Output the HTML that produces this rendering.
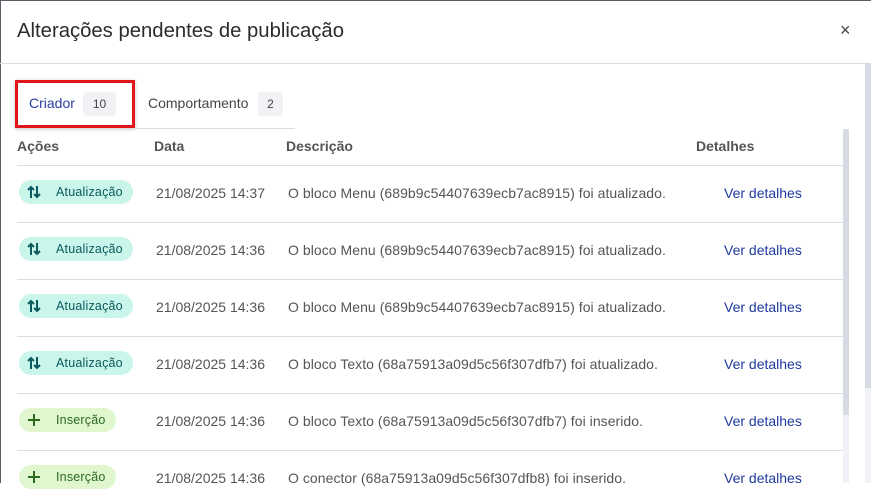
<!DOCTYPE html>
<html><head><meta charset="utf-8"><style>
*{margin:0;padding:0;box-sizing:border-box}
body{width:871px;height:483px;overflow:hidden;background:#fff;font-family:"Liberation Sans",sans-serif;position:relative}
.a{position:absolute;white-space:nowrap}
.hl{position:absolute;height:1px;background:#dcdde3}
.badge{position:absolute;left:19px;height:24px;border-radius:12px;font-size:12.5px;line-height:24px}
.up{background:#c9f5ea;color:#0b5a5e;width:114px}
.ins{background:#dff6cf;color:#2a6b1f;width:97px}
.badge span{position:absolute;left:37px;top:0;letter-spacing:0.2px}
.badge svg{position:absolute;left:8px;top:5px}
.d{font-size:14px;color:#555}
.desc{font-size:14px;color:#555;letter-spacing:0.05px}
.lnk{font-size:14px;color:#1f3a9e}
.th{font-size:14px;font-weight:bold;color:#555}
</style></head><body>
<div class="a" style="left:0;top:0;width:871px;height:1px;background:#5a5d66"></div>
<div class="a" style="left:0;top:0;width:1px;height:483px;background:#5a5d66"></div>
<div class="a" style="left:17px;top:20px;font-size:20.3px;color:#2b2b2b">Alterações pendentes de publicação</div>
<div class="a" style="left:840px;top:20px;font-size:18px;color:#444">×</div>
<div class="hl" style="left:0;top:63px;width:871px"></div>
<div class="a" style="left:865px;top:63px;width:6px;height:325px;background:#d8dbe3"></div>
<div class="a" style="left:865px;top:388px;width:6px;height:95px;background:#f1f2f7"></div>
<div class="a" style="left:843px;top:129px;width:6px;height:286px;background:#d8dbe3"></div>
<div class="a" style="left:843px;top:415px;width:6px;height:68px;background:#f1f2f7"></div>

<div class="a" style="left:15px;top:80px;width:120px;height:48px;border:3px solid #e0161b;box-shadow:0 1px 4px rgba(0,0,0,.25)"></div>
<div class="a" style="left:29px;top:95px;font-size:14px;color:#2a3f9f">Criador</div>
<div class="a" style="left:83px;top:92px;width:33px;height:24px;background:#f1f2f6;border-radius:4px;font-size:12px;color:#444;text-align:center;line-height:24px">10</div>
<div class="a" style="left:148px;top:95px;font-size:14px;color:#444">Comportamento</div>
<div class="a" style="left:258px;top:92px;width:25px;height:24px;background:#f1f2f6;border-radius:4px;font-size:12px;color:#444;text-align:center;line-height:24px">2</div>
<div class="hl" style="left:17px;top:128px;width:278px"></div>

<div class="a th" style="left:17px;top:138px">Ações</div>
<div class="a th" style="left:154px;top:138px">Data</div>
<div class="a th" style="left:286px;top:138px">Descrição</div>
<div class="a th" style="left:696px;top:138px">Detalhes</div>
<div class="hl" style="left:17px;top:165px;width:826px"></div>

<div class="badge up" style="top:180px"><svg width="14" height="14" viewBox="0 0 14 14" fill="none" stroke="#0b5a5e" stroke-width="2"><path d="M4 13V2M1 5l3-3 3 3M10 1v11M7 9l3 3 3-3"/></svg><span>Atualização</span></div>
<div class="a d" style="left:156px;top:185px">21/08/2025 14:37</div>
<div class="a desc" style="left:288px;top:185px">O bloco Menu (689b9c54407639ecb7ac8915) foi atualizado.</div>
<div class="a lnk" style="left:724px;top:185px">Ver detalhes</div>
<div class="hl" style="left:17px;top:222px;width:826px"></div>

<div class="badge up" style="top:237px"><svg width="14" height="14" viewBox="0 0 14 14" fill="none" stroke="#0b5a5e" stroke-width="2"><path d="M4 13V2M1 5l3-3 3 3M10 1v11M7 9l3 3 3-3"/></svg><span>Atualização</span></div>
<div class="a d" style="left:156px;top:242px">21/08/2025 14:36</div>
<div class="a desc" style="left:288px;top:242px">O bloco Menu (689b9c54407639ecb7ac8915) foi atualizado.</div>
<div class="a lnk" style="left:724px;top:242px">Ver detalhes</div>
<div class="hl" style="left:17px;top:279px;width:826px"></div>

<div class="badge up" style="top:294px"><svg width="14" height="14" viewBox="0 0 14 14" fill="none" stroke="#0b5a5e" stroke-width="2"><path d="M4 13V2M1 5l3-3 3 3M10 1v11M7 9l3 3 3-3"/></svg><span>Atualização</span></div>
<div class="a d" style="left:156px;top:299px">21/08/2025 14:36</div>
<div class="a desc" style="left:288px;top:299px">O bloco Menu (689b9c54407639ecb7ac8915) foi atualizado.</div>
<div class="a lnk" style="left:724px;top:299px">Ver detalhes</div>
<div class="hl" style="left:17px;top:336px;width:826px"></div>

<div class="badge up" style="top:351px"><svg width="14" height="14" viewBox="0 0 14 14" fill="none" stroke="#0b5a5e" stroke-width="2"><path d="M4 13V2M1 5l3-3 3 3M10 1v11M7 9l3 3 3-3"/></svg><span>Atualização</span></div>
<div class="a d" style="left:156px;top:356px">21/08/2025 14:36</div>
<div class="a desc" style="left:288px;top:356px">O bloco Texto (68a75913a09d5c56f307dfb7) foi atualizado.</div>
<div class="a lnk" style="left:724px;top:356px">Ver detalhes</div>
<div class="hl" style="left:17px;top:393px;width:826px"></div>

<div class="badge ins" style="top:408px"><svg width="14" height="14" viewBox="0 0 14 14" fill="none" stroke="#2a6b1f" stroke-width="2"><path d="M7 1v12M1 7h12"/></svg><span>Inserção</span></div>
<div class="a d" style="left:156px;top:413px">21/08/2025 14:36</div>
<div class="a desc" style="left:288px;top:413px">O bloco Texto (68a75913a09d5c56f307dfb7) foi inserido.</div>
<div class="a lnk" style="left:724px;top:413px">Ver detalhes</div>
<div class="hl" style="left:17px;top:450px;width:826px"></div>

<div class="badge ins" style="top:465px"><svg width="14" height="14" viewBox="0 0 14 14" fill="none" stroke="#2a6b1f" stroke-width="2"><path d="M7 1v12M1 7h12"/></svg><span>Inserção</span></div>
<div class="a d" style="left:156px;top:470px">21/08/2025 14:36</div>
<div class="a desc" style="left:288px;top:470px">O conector (68a75913a09d5c56f307dfb8) foi inserido.</div>
<div class="a lnk" style="left:724px;top:470px">Ver detalhes</div>
</body></html>
